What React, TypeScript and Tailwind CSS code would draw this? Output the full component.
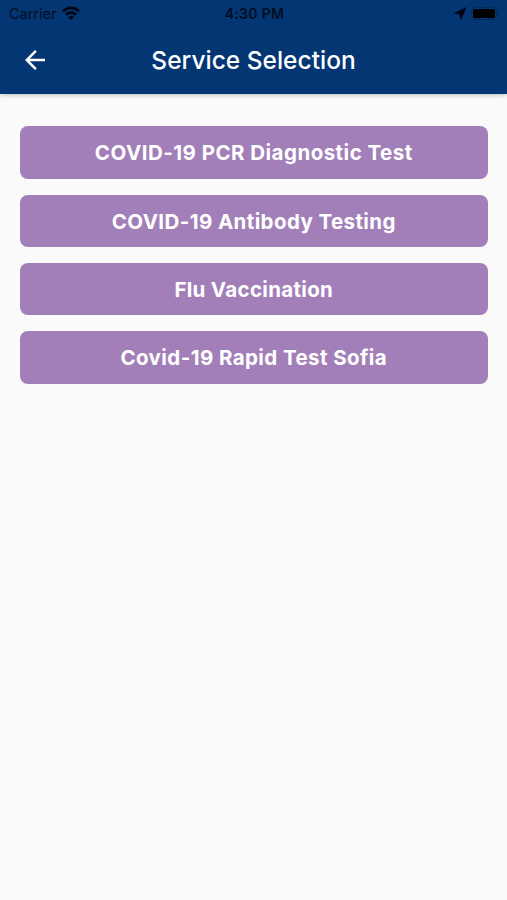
import React from 'react';

const services = [
  { id: 1, name: 'COVID-19 PCR Diagnostic Test', spacing: 'tracking-[0.47px]' },
  { id: 2, name: 'COVID-19 Antibody Testing', spacing: 'tracking-[0.4px]' },
  { id: 3, name: 'Flu Vaccination', spacing: 'tracking-[0.32px]' },
  { id: 4, name: 'Covid-19 Rapid Test Sofia', spacing: 'tracking-[0.42px]' },
];

const StatusBar: React.FC = () => (
  <div className="grid h-7 grid-cols-3 items-center pl-[9px] pr-[7px] text-[#010d24]">
    <div className="flex items-center gap-[6px]">
      <span className="text-[14.5px] leading-none tracking-[-0.02px]">Carrier</span>
      <svg width="18" height="14" viewBox="0 0 18 14" fill="none" stroke="#000612" strokeWidth="2.7" className="-mt-[2px]">
        <path d="M1 5.2a11.4 11.4 0 0 1 16 0" />
        <path d="M4 8.7a7.1 7.1 0 0 1 10 0" />
        <path d="M9 14 6.2 11.2a4 4 0 0 1 5.6 0Z" fill="#000612" stroke="none" />
      </svg>
    </div>
    <span className="text-center text-[14px] font-semibold leading-none tracking-[0.3px]">4:30 PM</span>
    <div className="flex items-center justify-end gap-1">
      <svg width="13" height="13" viewBox="0 0 13 13" fill="#000612" className="-mt-[1px]">
        <path d="M12.3.5.3 6.2 5.6 7.2 6.8 12.4Z" stroke="#000612" strokeWidth=".5" />
      </svg>
      <svg width="29" height="13" viewBox="0 0 29 13" className="-mt-[1px]">
        <rect x=".5" y=".5" width="25" height="12" rx="3" fill="none" stroke="#032a5c" />
        <rect x="2" y="2" width="22" height="9" rx="1.5" fill="#000" />
        <path d="M26.5 4.5c1.6.6 1.6 3.4 0 4Z" fill="#032a5c" />
      </svg>
    </div>
  </div>
);

const App: React.FC = () => {
  return (
    <div className="h-[900px] w-full overflow-hidden bg-[#fafafa] font-['Inter',sans-serif]">
      <header className="h-[93.5px] bg-[#043673] shadow-[0_1px_5px_rgba(0,0,0,0.25)]">
        <StatusBar />
        <div className="grid h-16 grid-cols-[70px_1fr_70px] items-center">
          <button className="flex justify-center" aria-label="Back">
            <svg width="30" height="30" viewBox="0 0 24 24" fill="#fff">
              <path d="M20 11H7.83l5.59-5.59L12 4l-8 8 8 8 1.41-1.41L7.83 13H20v-2z" />
            </svg>
          </button>
          <h1 className="whitespace-nowrap text-center text-[24.5px] font-medium leading-none text-white">
            Service Selection
          </h1>
        </div>
      </header>

      <main className="flex flex-col gap-[16px] pl-5 pr-[19.5px] pt-[32.7px]">
        {services.map((service) => (
          <button
            key={service.id}
            className={`h-[52.4px] shrink-0 rounded-lg bg-[#a37fba] pt-[2px] text-[20.5px] font-bold leading-none text-white ${service.spacing}`}
          >
            {service.name}
          </button>
        ))}
      </main>
    </div>
  );
};

export default App;
